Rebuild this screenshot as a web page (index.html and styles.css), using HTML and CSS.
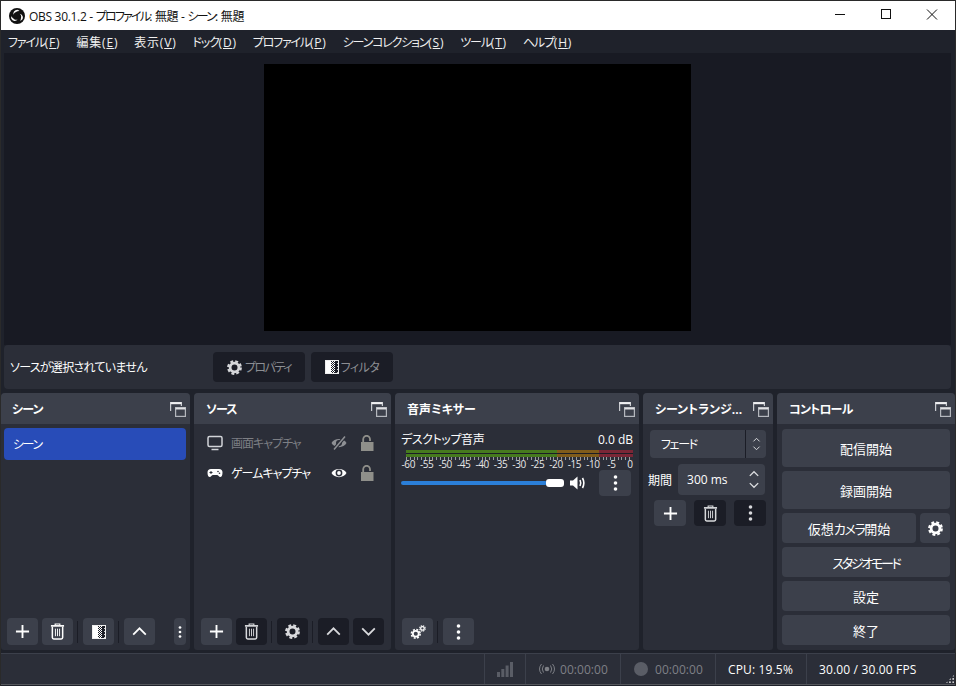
FILE: index.html
```html
<!DOCTYPE html>
<html lang="ja">
<head>
<meta charset="utf-8">
<title>OBS</title>
<link rel="stylesheet" href="styles.css">
</head>
<body>
<svg class="defs" width="0" height="0">
<defs>
<pattern id="dither" width="2" height="2" patternUnits="userSpaceOnUse"><rect width="1" height="1" fill="#fff"/><rect x="1" y="1" width="1" height="1" fill="#fff"/></pattern>
<pattern id="dither2" width="3" height="3" patternUnits="userSpaceOnUse"><rect width="1" height="1" fill="#ccc"/></pattern>
<symbol id="float" viewBox="0 0 16 16"><path d="M0.600 10V1.600h10.800V5" fill="none" stroke="#c8cacf" stroke-width="1.200"/><path d="M0.600 2.200h10.800" stroke="#f0f0f2" stroke-width="2"/><rect x="5.600" y="6.600" width="9.800" height="8.800" fill="#3c404b" stroke="#b4b7bd" stroke-width="1.200"/><path d="M5.600 7.600h9.800" stroke="#e0e1e4" stroke-width="1.800"/></symbol>
<symbol id="plus" viewBox="0 0 16 16"><path d="M8 1v14M1 8h14" stroke="currentColor" stroke-width="2" fill="none"/></symbol>
<symbol id="trash" viewBox="0 0 16 18"><path d="M1 3h14" stroke="currentColor" stroke-width="1.800"/><path d="M5.500 2.500V1h5v1.500" stroke="currentColor" stroke-width="1.200" fill="none"/><path d="M2.500 4v11.500q0 1.500 1.500 1.500h8q1.500 0 1.500-1.500V4" stroke="currentColor" stroke-width="1.600" fill="none"/><path d="M5.800 6v8M8 6v8M10.200 6v8" stroke="currentColor" stroke-width="1"/></symbol>
<symbol id="filter" viewBox="0 0 14 14"><rect width="14" height="14" fill="#1b1d26"/><rect x="1" y="1" width="5" height="12" fill="#fff"/><rect x="6" y="1" width="4" height="12" fill="url(#dither)"/><rect x="10" y="1" width="3" height="12" fill="url(#dither2)"/><rect x="0.500" y="0.500" width="13" height="13" fill="none" stroke="#eee"/></symbol>
<symbol id="up" viewBox="0 0 16 10"><path d="M1 8.500 8 1.500l7 7" stroke="currentColor" stroke-width="2" fill="none"/></symbol>
<symbol id="down" viewBox="0 0 16 10"><path d="M1 1.500l7 7 7-7" stroke="currentColor" stroke-width="2" fill="none"/></symbol>
<symbol id="dots" viewBox="0 0 4 16"><circle cx="2" cy="2" r="1.800" fill="currentColor"/><circle cx="2" cy="8" r="1.800" fill="currentColor"/><circle cx="2" cy="14" r="1.800" fill="currentColor"/></symbol>
<symbol id="gear" viewBox="0 0 16 16"><circle cx="8" cy="8" r="4.700" fill="none" stroke="currentColor" stroke-width="3"/><circle cx="8" cy="8" r="6.700" fill="none" stroke="currentColor" stroke-width="2.400" stroke-dasharray="3.060 2.200"/></symbol>
<symbol id="gears" viewBox="0 0 18 16"><circle cx="6.500" cy="10" r="3.300" fill="none" stroke="currentColor" stroke-width="2"/><circle cx="6.500" cy="10" r="4.900" fill="none" stroke="currentColor" stroke-width="1.800" stroke-dasharray="2.200 1.650"/><circle cx="14" cy="4" r="2" fill="none" stroke="currentColor" stroke-width="1.400"/><circle cx="14" cy="4" r="3.100" fill="none" stroke="currentColor" stroke-width="1.200" stroke-dasharray="1.500 0.950"/></symbol>
<symbol id="lock" viewBox="0 0 14 16"><path d="M3.200 7.500V4.200a3.400 3.400 0 0 1 6.800 0V6" fill="none" stroke="currentColor" stroke-width="1.800"/><rect x="1" y="7" width="12.500" height="9" fill="currentColor"/></symbol>
<symbol id="eye" viewBox="0 0 16 12"><path d="M0.500 6C3 .5 13 .5 15.500 6 13 11.500 3 11.500.5 6Z" fill="currentColor"/><circle cx="8" cy="6" r="3.400" fill="#2b2e38"/><circle cx="8" cy="6" r="1.900" fill="currentColor"/></symbol>
<symbol id="eyeoff" viewBox="0 0 16 14"><path d="M0.500 7C3 1.500 13 1.500 15.500 7 13 12.500 3 12.500.5 7Z" fill="currentColor"/><circle cx="8" cy="7" r="3" fill="#2b2e38"/><path d="M3 13.500 14 .5" stroke="#2b2e38" stroke-width="3.500"/><path d="M3 13.500 14 .5" stroke="currentColor" stroke-width="1.500"/></symbol>
<symbol id="monitor" viewBox="0 0 16 15"><rect x="1" y="1" width="14" height="10" rx="1.500" fill="none" stroke="currentColor" stroke-width="1.500"/><path d="M4.500 14h7" stroke="currentColor" stroke-width="1.500"/></symbol>
<symbol id="pad" viewBox="0 0 16 9"><path d="M4 .5h8a3.500 3.500 0 0 1 3.500 3.500c0 3-1 4.500-2.200 4.500-1.300 0-2-2-3.300-2H6c-1.300 0-2 2-3.300 2C1.500 8.500.5 7 .5 4A3.500 3.500 0 0 1 4 .5Z" fill="currentColor"/><path d="M2.500 4h3M4 2.500v3" stroke="#2b2e38"/><circle cx="11" cy="3" r=".8" fill="#2b2e38"/><circle cx="12.500" cy="4.800" r=".8" fill="#2b2e38"/></symbol>
<symbol id="speaker" viewBox="0 0 17 14"><path d="M0 4.500h3L7.500 .5v13L3 9.500H0Z" fill="currentColor"/><path d="M10 4q1.500 3 0 6M12.500 2q2.700 5 0 10" fill="none" stroke="currentColor" stroke-width="1.600"/></symbol>
<symbol id="updown" viewBox="0 0 10 16"><path d="M1.500 5 5 1.500 8.500 5M1.500 11 5 14.500 8.500 11" fill="none" stroke="currentColor" stroke-width="1.100"/></symbol>
<symbol id="bars" viewBox="0 0 16 15"><rect x="0" y="10" width="3" height="5" fill="currentColor"/><rect x="4.300" y="7" width="3" height="8" fill="currentColor"/><rect x="8.600" y="3.500" width="3" height="11.500" fill="currentColor"/><rect x="13" y="0" width="3" height="15" fill="currentColor"/></symbol>
<symbol id="cast" viewBox="0 0 16 12"><circle cx="8" cy="6" r="2.300" fill="currentColor"/><path d="M4.500 2.500q-2.500 3.500 0 7M11.500 2.500q2.500 3.500 0 7M2.500 1q-4 5 0 10M13.500 1q4 5 0 10" fill="none" stroke="currentColor"/></symbol>
<path id="blade" d="M4.600 6.800A3.800 3.800 0 0 1 8.400 1.700 3.300 3.300 0 0 1 10.500 3 6 6 0 0 0 7 3.900a3.600 3.600 0 0 0-2.400 2.900Z" fill="#f6f6f6"/>
</defs>
</svg>
<div class="app">
  <header class="titlebar">
    <svg class="logo" viewBox="0 0 16 16"><circle cx="8" cy="8" r="8" fill="#111"/><use href="#blade"/><use href="#blade" transform="rotate(120 8 8)"/><use href="#blade" transform="rotate(240 8 8)"/></svg>
    <span class="title">OBS 30.1.2 - <span class="k-t">プロファイル</span>: 無題 - <span class="k-t">シーン</span>: 無題</span>
    <div class="winbtns">
      <svg class="winbtn" viewBox="0 0 46 30"><path d="M18 14.500h10" stroke="#111"/></svg>
      <svg class="winbtn" viewBox="0 0 46 30"><rect x="18.500" y="9.500" width="9" height="9" fill="none" stroke="#111"/></svg>
      <svg class="winbtn" viewBox="0 0 46 30"><path d="M18 9.500l10 10M28 9.500l-10 10" stroke="#111"/></svg>
    </div>
  </header>
  <nav class="menubar">
    <span><span class="k">ファイル</span>(<u>F</u>)</span><span>編集(<u>E</u>)</span><span>表示(<u>V</u>)</span><span><span class="k">ドック</span>(<u>D</u>)</span><span><span class="k">プロファイル</span>(<u>P</u>)</span><span><span class="k">シーンコレクション</span>(<u>S</u>)</span><span><span class="k">ツール</span>(<u>T</u>)</span><span><span class="k">ヘルプ</span>(<u>H</u>)</span>
  </nav>
  <section class="preview-area"><div class="preview"></div></section>
  <section class="context">
    <span class="ctx-label">ソースが選択されていません</span>
    <button class="ctx-btn ctx-first"><svg class="i15"><use href="#gear"/></svg>プロパティ</button>
    <button class="ctx-btn ctx-second"><svg class="i14"><use href="#filter"/></svg>フィルタ</button>
  </section>
  <main class="docks">
    <section class="dock">
      <div class="dock-head"><h2 class="h-tight">シーン</h2><svg class="i16"><use href="#float"/></svg></div>
      <div class="dock-body">
        <div class="scene-item">シーン</div>
        <div class="toolbar">
          <button class="tb"><svg class="i15"><use href="#plus"/></svg></button>
          <button class="tb"><svg class="i-trash"><use href="#trash"/></svg></button>
          <i class="sep"></i>
          <button class="tb"><svg class="i14"><use href="#filter"/></svg></button>
          <i class="sep"></i>
          <button class="tb"><svg class="i-chev"><use href="#up"/></svg></button>
          <button class="tb tb-narrow"><svg class="i-dots-s"><use href="#dots"/></svg></button>
        </div>
      </div>
    </section>
    <section class="dock dock-p12">
      <div class="dock-head"><h2 class="h-tight">ソース</h2><svg class="i16"><use href="#float"/></svg></div>
      <div class="dock-body">
        <div class="source dim"><svg class="i16 src-ic"><use href="#monitor"/></svg><span class="src-name">画面キャプチャ</span><svg class="i16"><use href="#eyeoff"/></svg><svg class="i-lock"><use href="#lock"/></svg></div>
        <div class="source"><svg class="i16 src-ic"><use href="#pad"/></svg><span class="src-name">ゲームキャプチャ</span><svg class="i16"><use href="#eye"/></svg><svg class="i-lock"><use href="#lock"/></svg></div>
        <div class="toolbar">
          <button class="tb"><svg class="i15"><use href="#plus"/></svg></button>
          <button class="tb dark"><svg class="i-trash"><use href="#trash"/></svg></button>
          <i class="sep"></i>
          <button class="tb dark"><svg class="i15"><use href="#gear"/></svg></button>
          <i class="sep"></i>
          <button class="tb dark"><svg class="i-chev"><use href="#up"/></svg></button>
          <button class="tb dark"><svg class="i-chev"><use href="#down"/></svg></button>
        </div>
      </div>
    </section>
    <section class="dock dock-p12">
      <div class="dock-head"><h2>音声ミキサー</h2><svg class="i16"><use href="#float"/></svg></div>
      <div class="dock-body">
        <div class="mixer-head"><span class="m-name">デスクトップ音声</span><span>0.0 dB</span></div>
        <div class="meter"><i class="m-g"></i><i class="m-y"></i><i class="m-r"></i></div>
        <div class="ticks"></div>
        <div class="scale"><span>-60</span><span>-55</span><span>-50</span><span>-45</span><span>-40</span><span>-35</span><span>-30</span><span>-25</span><span>-20</span><span>-15</span><span>-10</span><span>-5</span><span>0</span></div>
        <div class="vol">
          <div class="slider"><i class="fill"></i><i class="handle"></i></div>
          <svg class="i-speaker"><use href="#speaker"/></svg>
          <button class="tb tb-vol"><svg class="i-dots"><use href="#dots"/></svg></button>
        </div>
        <div class="toolbar">
          <button class="tb"><svg class="i16"><use href="#gears"/></svg></button>
          <i class="sep"></i>
          <button class="tb"><svg class="i-dots"><use href="#dots"/></svg></button>
        </div>
      </div>
    </section>
    <section class="dock dock-p12">
      <div class="dock-head"><h2>シーントランジ...</h2><svg class="i16"><use href="#float"/></svg></div>
      <div class="dock-body trans">
        <div class="select"><span class="sel-text">フェード</span><span class="sel-arrow"><svg class="i-ud"><use href="#updown"/></svg></span></div>
        <div class="duration"><span>期間</span><div class="spin"><span>300 ms</span><svg class="i-ud-l"><use href="#updown"/></svg></div></div>
        <div class="trans-btns">
          <button class="tb tb-t"><svg class="i15"><use href="#plus"/></svg></button>
          <button class="tb tb-t dark"><svg class="i-trash"><use href="#trash"/></svg></button>
          <button class="tb tb-t dark"><svg class="i-dots"><use href="#dots"/></svg></button>
        </div>
      </div>
    </section>
    <section class="dock dock-p12">
      <div class="dock-head"><h2 class="h-tight">コントロール</h2><svg class="i16"><use href="#float"/></svg></div>
      <div class="dock-body controls">
        <button class="cb cb-tall">配信開始</button>
        <button class="cb cb-tall">録画開始</button>
        <div class="cb-row"><button class="cb cb-grow"><span>仮想<span class="cb-k">カメラ</span>開始</span></button><button class="cb cb-icon"><svg class="i15"><use href="#gear"/></svg></button></div>
        <button class="cb cb-studio">スタジオモード</button>
        <button class="cb">設定</button>
        <button class="cb">終了</button>
      </div>
    </section>
  </main>
  <footer class="status">
    <div class="st st-bars"><svg class="i-bars"><use href="#bars"/></svg></div>
    <div class="st st-time"><svg class="i-cast"><use href="#cast"/></svg><span>00:00:00</span></div>
    <div class="st st-time"><i class="rec"></i><span>00:00:00</span></div>
    <div class="st st-cpu">CPU: 19.5%</div>
    <div class="st st-fps">30.00 / 30.00 FPS</div>
    <div class="grip"></div>
  </footer>
</div>
</body>
</html>
```
FILE: styles.css
```css
* { box-sizing: border-box; }
html, body { margin: 0; height: 100%; overflow: hidden; }
body { font-family: "Open Sans", "Noto Sans CJK JP", sans-serif; font-size: 12px; font-feature-settings: "palt"; color: #fefefe; background: #1f222b; }
.defs { position: absolute; }
.app { width: 956px; height: 686px; display: flex; flex-direction: column; border: 1px solid #2a2a2a; border-bottom: 0; background: #1f222b; }
svg { display: block; flex: none; }
button { font: inherit; font-feature-settings: inherit; color: inherit; border: 0; padding: 0; }

.titlebar { height: 29px; background: #fff; color: #111; display: flex; align-items: center; padding-left: 8px; }
.logo { width: 16px; height: 16px; }
.title { margin-left: 4px; flex: 1; letter-spacing: -0.3px; }
.k-t { letter-spacing: -1.8px; }
.winbtns { display: flex; align-self: flex-start; }
.winbtn { width: 46px; height: 30px; margin-top: -1px; }

.menubar { height: 23px; display: flex; align-items: center; gap: 16px; padding-left: 7px; color: #f0f0f0; letter-spacing: 0.8px; }
.k { letter-spacing: -1.2px; }

.preview-area { height: 292px; background: #181a23; display: flex; justify-content: center; padding: 11px 0 14px; margin: 0 4px 0 3px; }
.preview { width: 427px; background: #000; }

.context { height: 44px; margin: 0 4px 4px 3px; background: #2b2e38; border-radius: 4px; display: flex; align-items: center; padding-left: 6px; }
.ctx-label { width: 203px; letter-spacing: -0.7px; }
.ctx-btn { height: 30px; background: #1b1d26; border-radius: 4px; display: flex; align-items: center; justify-content: center; gap: 3px; color: #8c8e93; }
.ctx-btn svg { color: #d6d7da; }
.ctx-first { width: 92px; letter-spacing: -1.5px; }
.ctx-second { width: 82px; margin-left: 6px; letter-spacing: -0.5px; gap: 2px; }

.docks { height: 257px; display: grid; grid-template-columns: 189px 197px 244px 130px 178px; column-gap: 4px; }
.dock { background: #2b2e38; border-radius: 4px 4px 3px 3px; display: flex; flex-direction: column; min-width: 0; }
.dock-head { height: 31px; background: #3c404b; border-radius: 4px 4px 0 0; display: flex; align-items: center; justify-content: space-between; padding: 0 4px 0 11px; }
.dock-p12 .dock-head { padding-left: 12px; }
.dock-head h2 { margin: 0; font-size: 12px; font-weight: 700; white-space: nowrap; }
.dock-head .h-tight { letter-spacing: -0.8px; }
.dock-body { flex: 1; display: flex; flex-direction: column; padding-top: 4px; min-height: 0; }

.i16 { width: 16px; height: 16px; }
.i15 { width: 15px; height: 15px; }
.i14 { width: 14px; height: 14px; }
.i-trash { width: 15px; height: 17px; }
.i-chev { width: 15px; height: 9px; }
.i-dots { width: 5px; height: 16px; }
.i-dots-s { width: 4px; height: 12px; }
.i-lock { width: 14px; height: 16px; color: #8f8f8a; margin-left: 13px; }
.i-speaker { width: 17px; height: 14px; margin-left: 6px; }
.i-ud { width: 9px; height: 14px; }
.i-ud-l { width: 12px; height: 21px; color: #dcdde0; }
.i-bars { width: 16px; height: 15px; }
.i-cast { width: 16px; height: 12px; }

.scene-item { height: 32px; margin: 0 4px 0 3px; background: #284cb8; border-radius: 4px; display: flex; align-items: center; padding-left: 9px; letter-spacing: -1.5px; }

.toolbar { margin-top: auto; height: 27px; margin-bottom: 5px; display: flex; align-items: center; gap: 4px; padding-left: 6px; }
.tb { width: 31px; height: 27px; background: #3c404b; border-radius: 4px; display: flex; align-items: center; justify-content: center; color: #fefefe; }
.tb.dark { background: #1b1d26; color: #d8d9dc; }
.tb-narrow { width: 12px; margin-left: 15px; }
.sep { width: 1px; height: 22px; background: #1b1d26; margin-right: 1px; }
.dock:nth-child(2) .toolbar, .dock:nth-child(3) .toolbar { padding-left: 7px; }

.source { height: 30px; display: flex; align-items: center; padding: 0 17px 0 13px; flex: none; letter-spacing: -1px; }
.source.dim { color: #8e9094; }
.source.dim .src-ic { color: #d2d4d8; }
.source.dim .src-name { color: #7d7f84; }
.src-name { margin-left: 8px; flex: 1; }

.mixer-head { display: flex; justify-content: space-between; padding: 2px 6px 0; height: 20px; align-items: center; }
.m-name { letter-spacing: -0.4px; }
.meter { margin: 2px 6px 0 11px; height: 7px; display: flex; }
.meter i { display: block; height: 100%; background-image: linear-gradient(#1b1d26, #1b1d26); background-size: 100% 1px; background-position: 0 3px; background-repeat: no-repeat; }
.m-g { width: 151px; background-color: #467a1e; }
.m-y { width: 42px; background-color: #7f5b1b; }
.m-r { flex: 1; background-color: #7a2636; }
.ticks { margin: 0 6px 0 11px; height: 3px; background: repeating-linear-gradient(90deg, #9a9ca0 0, #9a9ca0 1px, transparent 1px, transparent 3.780px); }
.scale { display: flex; width: 240px; margin: -2px 0 0 4px; font-size: 10px; letter-spacing: -0.4px; line-height: 13px; height: 13px; color: #e8e8e8; }
.scale span { flex: 1; text-align: center; }
.vol { display: flex; align-items: center; padding-left: 6px; margin-top: -2px; height: 27px; }
.slider { width: 163px; height: 8px; position: relative; }
.fill { position: absolute; left: 0; top: 2px; width: 146px; height: 4px; border-radius: 2px; background: #2b7fd8; }
.handle { position: absolute; left: 145px; top: 0; width: 18px; height: 8px; border-radius: 3px; background: #fff; }
.tb-vol { width: 32px; height: 26px; margin-left: 12px; }

.trans { padding: 6px 7px 0; }
.select { height: 28px; background: #3c404b; border-radius: 4px; display: flex; align-items: center; }
.sel-text { flex: 1; padding-left: 11px; letter-spacing: -1.3px; }
.sel-arrow { width: 21px; height: 100%; border-left: 1px solid #1b1d26; display: flex; align-items: center; justify-content: center; color: #dcdde0; }
.duration { display: flex; align-items: center; margin: 6px 1px 0 -2px; height: 31px; gap: 6px; }
.spin { flex: 1; height: 31px; background: #3c404b; border-radius: 4px; display: flex; align-items: center; justify-content: space-between; padding: 0 5px 0 9px; }
.trans-btns { display: flex; gap: 8px; margin: 5px 0 0 4px; }
.tb-t { width: 32px; height: 26px; }

.controls { padding: 5px 5px 0 5px; gap: 4px; }
.cb { height: 30px; background: #3c404b; border-radius: 4px; display: flex; align-items: center; justify-content: center; color: #fefefe; flex: none; font-size: 13px; }
.cb-tall { height: 38px; }
.cb-row { display: flex; gap: 4px; }
.cb-grow { flex: 1; }
.cb-k { letter-spacing: -1.4px; }
.cb-studio { letter-spacing: -2.3px; }
.cb-icon { width: 30px; }

.status { height: 32px; margin-top: 3px; background: #2b2e38; border-top: 1px solid #3c404b; border-bottom: 1px solid #55575c; display: flex; position: relative; padding-left: 483px; letter-spacing: 0.15px; }
.st { height: 100%; border-left: 1px solid #3c404b; display: flex; align-items: center; flex: none; }
.st-bars { width: 41px; padding-left: 12px; color: #5a5d66; }
.st-time { width: 95px; padding-left: 13px; color: #7e8086; gap: 5px; letter-spacing: 0.05px; }
.st-time:nth-child(3) { gap: 7px; }
.st-cpu { width: 91px; padding-left: 12px; }
.st-fps { padding-left: 12px; width: 130px; }
.rec { display: block; width: 14px; height: 14px; border-radius: 50%; background: #5a5d66; }
.grip { position: absolute; right: 0; bottom: 0; width: 10px; height: 10px; background: radial-gradient(circle, #d0d0d0 0 1px, transparent 1.2px) 0 0 / 3.300px 3.300px; clip-path: polygon(100% 0, 100% 100%, 0 100%); }
```
